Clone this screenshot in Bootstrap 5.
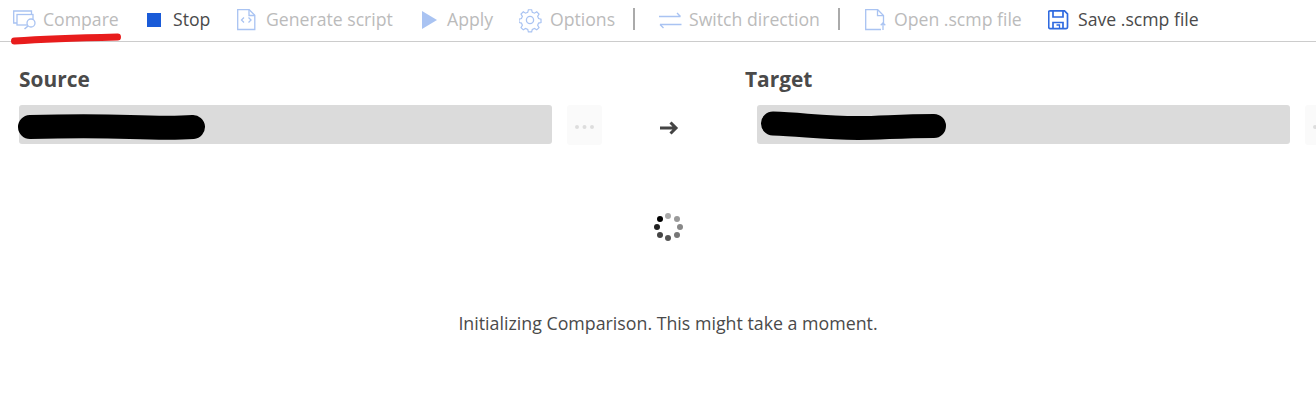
<!DOCTYPE html>
<html lang="en">
  <head>
    <meta charset="UTF-8" />
    <meta name="viewport" content="width=device-width, initial-scale=1.0" />
    <title>Schema Compare</title>
    <link
      href="https://cdn.jsdelivr.net/npm/bootstrap@5.3.2/dist/css/bootstrap.min.css"
      rel="stylesheet"
    />
    <style>
      body {
        font-family: "Open Sans", "Noto Sans", sans-serif;
        color: #4a4a4a;
        background: #fff;
        height: 410px;
        overflow: hidden;
      }
      .tool-strip {
        display: grid;
        grid-template-columns: 134px 90px 185px 97px 115px 25px 180px 26px 183px 1fr;
        height: 42px;
        padding-left: 13px;
        border-bottom: 1px solid #ccc;
        font-size: 17.65px;
      }
      .tool-item {
        display: flex;
        align-items: center;
        height: 41px;
        white-space: nowrap;
      }
      .tool-item span {
        margin-top: -2px;
      }
      .tool-item svg {
        flex: none;
      }
      .tool-off {
        color: #bbb;
      }
      .tool-sep {
        width: 2px;
        height: 22px;
        margin-top: 8px;
        margin-left: -1px;
        background: #aaa;
      }
      .side-labels {
        padding: 23px 0 0 19px;
        font-size: 20.9px;
        font-weight: 700;
        line-height: 28px;
      }
      .source-label {
        width: 726px;
      }
      .path-row {
        height: 40px;
        margin-top: 12px;
        padding-left: 19px;
        width: 1316px;
      }
      .path-box {
        position: relative;
        flex: none;
        width: 533px;
        height: 39px;
        background: #dbdbdb;
        border-radius: 3px;
      }
      .path-box svg {
        position: absolute;
        left: -1px;
        top: 0;
      }
      .path-box svg.scribble-target {
        left: 4px;
      }
      .browse-btn {
        flex: none;
        width: 35px;
        height: 40px;
        margin-left: 15px;
        padding: 0;
        background: #fafafa;
        border: 0;
        border-radius: 3px;
      }
      .browse-btn svg {
        display: block;
      }
      .arrow-cell {
        flex: none;
        width: 155px;
        padding-left: 57px;
      }
      .status-block {
        padding-left: 20px;
        padding-top: 67px;
      }
      .status-text {
        margin-top: 67px;
        font-size: 17.8px;
        line-height: 24px;
      }
      .red-mark {
        position: absolute;
        left: 0;
        top: 0;
      }
    </style>
  </head>
  <body class="position-relative">
    <div class="tool-strip">
      <div class="tool-item tool-off">
        <svg width="30" height="41" viewBox="0 0 30 41" fill="none" stroke="#a9c3f2" stroke-width="1.3">
          <path d="M4 23H.7V11H18.500v3.500" />
          <rect x="4" y="14.500" width="16" height="10.500" />
          <circle cx="18" cy="23" r="4" fill="#fff" />
          <path d="M15 26 11.500 29" stroke-width="1.600" />
        </svg>
        <span>Compare</span>
      </div>
      <div class="tool-item">
        <svg width="26" height="41" viewBox="0 0 26 41">
          <rect x="0" y="13" width="14" height="14" fill="#1a5bd8" />
        </svg>
        <span>Stop</span>
      </div>
      <div class="tool-item tool-off">
        <svg width="29" height="41" viewBox="0 0 29 41" fill="none" stroke="#a9c3f2" stroke-width="1.3">
          <path d="M.7 9.700h11.500l5.600 5.600v14.200H.7z" />
          <path d="M12 9.700v5.800h5.800" />
          <path d="M7 17.500 4.500 20 7 22.500M11.500 17.500 14 20l-2.500 2.500" />
        </svg>
        <span>Generate script</span>
      </div>
      <div class="tool-item tool-off">
        <svg width="25" height="41" viewBox="0 0 25 41">
          <path d="M0 11v18l15-9z" fill="#a9c3f2" />
        </svg>
        <span>Apply</span>
      </div>
      <div class="tool-item tool-off">
        <svg width="31" height="41" viewBox="0 0 31 41" fill="none" stroke="#a9c3f2" stroke-width="1.3">
          <circle cx="11" cy="20" r="3.600" />
          <path d="M9.200 9.600h3.600l.7 2.800 2.400 1 2.500-1.500 2.500 2.500-1.500 2.500 1 2.400 2.700.7v3.600l-2.700.7-1 2.400 1.500 2.500-2.500 2.500-2.500-1.500-2.400 1-.7 2.800H9.200l-.7-2.800-2.400-1-2.500 1.500-2.500-2.500 1.500-2.500-1-2.400-2.700-.7v-3.600l2.700-.7 1-2.400-1.500-2.500 2.500-2.500 2.500 1.500 2.400-1z" transform="translate(1 1) scale(.91)" />
        </svg>
        <span>Options</span>
      </div>
      <div class="tool-sep"></div>
      <div class="tool-item tool-off">
        <svg width="30" height="41" viewBox="0 0 30 41" fill="none" stroke="#a9c3f2" stroke-width="1.4">
          <path d="M0 16.500h21.500M18 13l3.500 3.500" />
          <path d="M1 24.500h21.500M4.500 28 1 24.500" />
        </svg>
        <span>Switch direction</span>
      </div>
      <div class="tool-sep"></div>
      <div class="tool-item tool-off">
        <svg width="29" height="41" viewBox="0 0 29 41" fill="none" stroke="#a9c3f2" stroke-width="1.3">
          <path d="M16 29.500H.7V9.700h12l5.800 5.800V23" />
          <path d="M12.500 9.700v6h6" />
          <path d="M18 30v-7M15.700 25.300 18 23l2.300 2.300" />
        </svg>
        <span>Open .scmp file</span>
      </div>
      <div class="tool-item">
        <svg width="30" height="41" viewBox="0 0 30 41" fill="none" stroke="#2f6ae0" stroke-width="1.7">
          <path d="M2 10.800h14.500l3 3v13.500a1.300 1.300 0 0 1-1.300 1.300H2a1.300 1.300 0 0 1-1.300-1.300V12.100A1.300 1.300 0 0 1 2 10.800z" />
          <path d="M5 11v6h10v-6M5 28.500V22.500h10v6" />
          <path d="M8.500 25h3v3.500" stroke-width="1.300" />
        </svg>
        <span>Save .scmp file</span>
      </div>
    </div>

    <div class="d-flex side-labels">
      <div class="source-label">Source</div>
      <div>Target</div>
    </div>

    <div class="d-flex path-row overflow-hidden">
      <div class="path-box">
        <svg width="190" height="39" viewBox="0 0 190 39" fill="none">
          <path d="M12 22c40-1 70-1 100 0 28 1 50 1 63 0" stroke="#000" stroke-width="24" stroke-linecap="round" />
        </svg>
      </div>
      <button type="button" class="browse-btn" disabled aria-label="Browse source">
        <svg width="35" height="40" viewBox="0 0 35 40" fill="#ddd">
          <circle cx="10" cy="22" r="2" /><circle cx="17.500" cy="22" r="2" /><circle cx="25" cy="22" r="2" />
        </svg>
      </button>
      <div class="arrow-cell">
        <svg width="20" height="40" viewBox="0 0 20 40" fill="none" stroke="#444" stroke-width="3">
          <path d="M1 23h16M11.500 17.500 17 23l-5.500 5.500" />
        </svg>
      </div>
      <div class="path-box">
        <svg class="scribble-target" width="195" height="39" viewBox="0 0 195 39" fill="none">
          <path d="M12 18.500c30 1 50 4.500 85 4.500 25 0 40-2 76-2" stroke="#000" stroke-width="24" stroke-linecap="round" />
        </svg>
      </div>
      <button type="button" class="browse-btn" disabled aria-label="Browse target">
        <svg width="35" height="40" viewBox="0 0 35 40" fill="#ddd">
          <circle cx="10" cy="22" r="2" /><circle cx="17.500" cy="22" r="2" /><circle cx="25" cy="22" r="2" />
        </svg>
      </button>
    </div>

    <div class="status-block text-center">
      <svg width="32" height="32" viewBox="0 0 32 32" class="d-block mx-auto">
        <circle cx="16" cy="4" r="3" fill="#aaa" />
        <circle cx="25" cy="7" r="3" fill="#999" />
        <circle cx="28" cy="15" r="3" fill="#888" />
        <circle cx="25" cy="23" r="3" fill="#777" />
        <circle cx="16" cy="26" r="3" fill="#555" />
        <circle cx="8" cy="23" r="3" fill="#444" />
        <circle cx="5" cy="15" r="3" fill="#222" />
        <circle cx="8" cy="7" r="3" fill="#000" />
      </svg>
      <div class="status-text">Initializing Comparison. This might take a moment.</div>
    </div>

    <svg class="red-mark" width="130" height="50" viewBox="0 0 130 50" fill="none">
      <path d="M14.500 41c30-2 60-3 103-4" stroke="#e81c1c" stroke-width="7" stroke-linecap="round" />
    </svg>

    <script src="https://cdn.jsdelivr.net/npm/bootstrap@5.3.2/dist/js/bootstrap.bundle.min.js"></script>
  </body>
</html>
